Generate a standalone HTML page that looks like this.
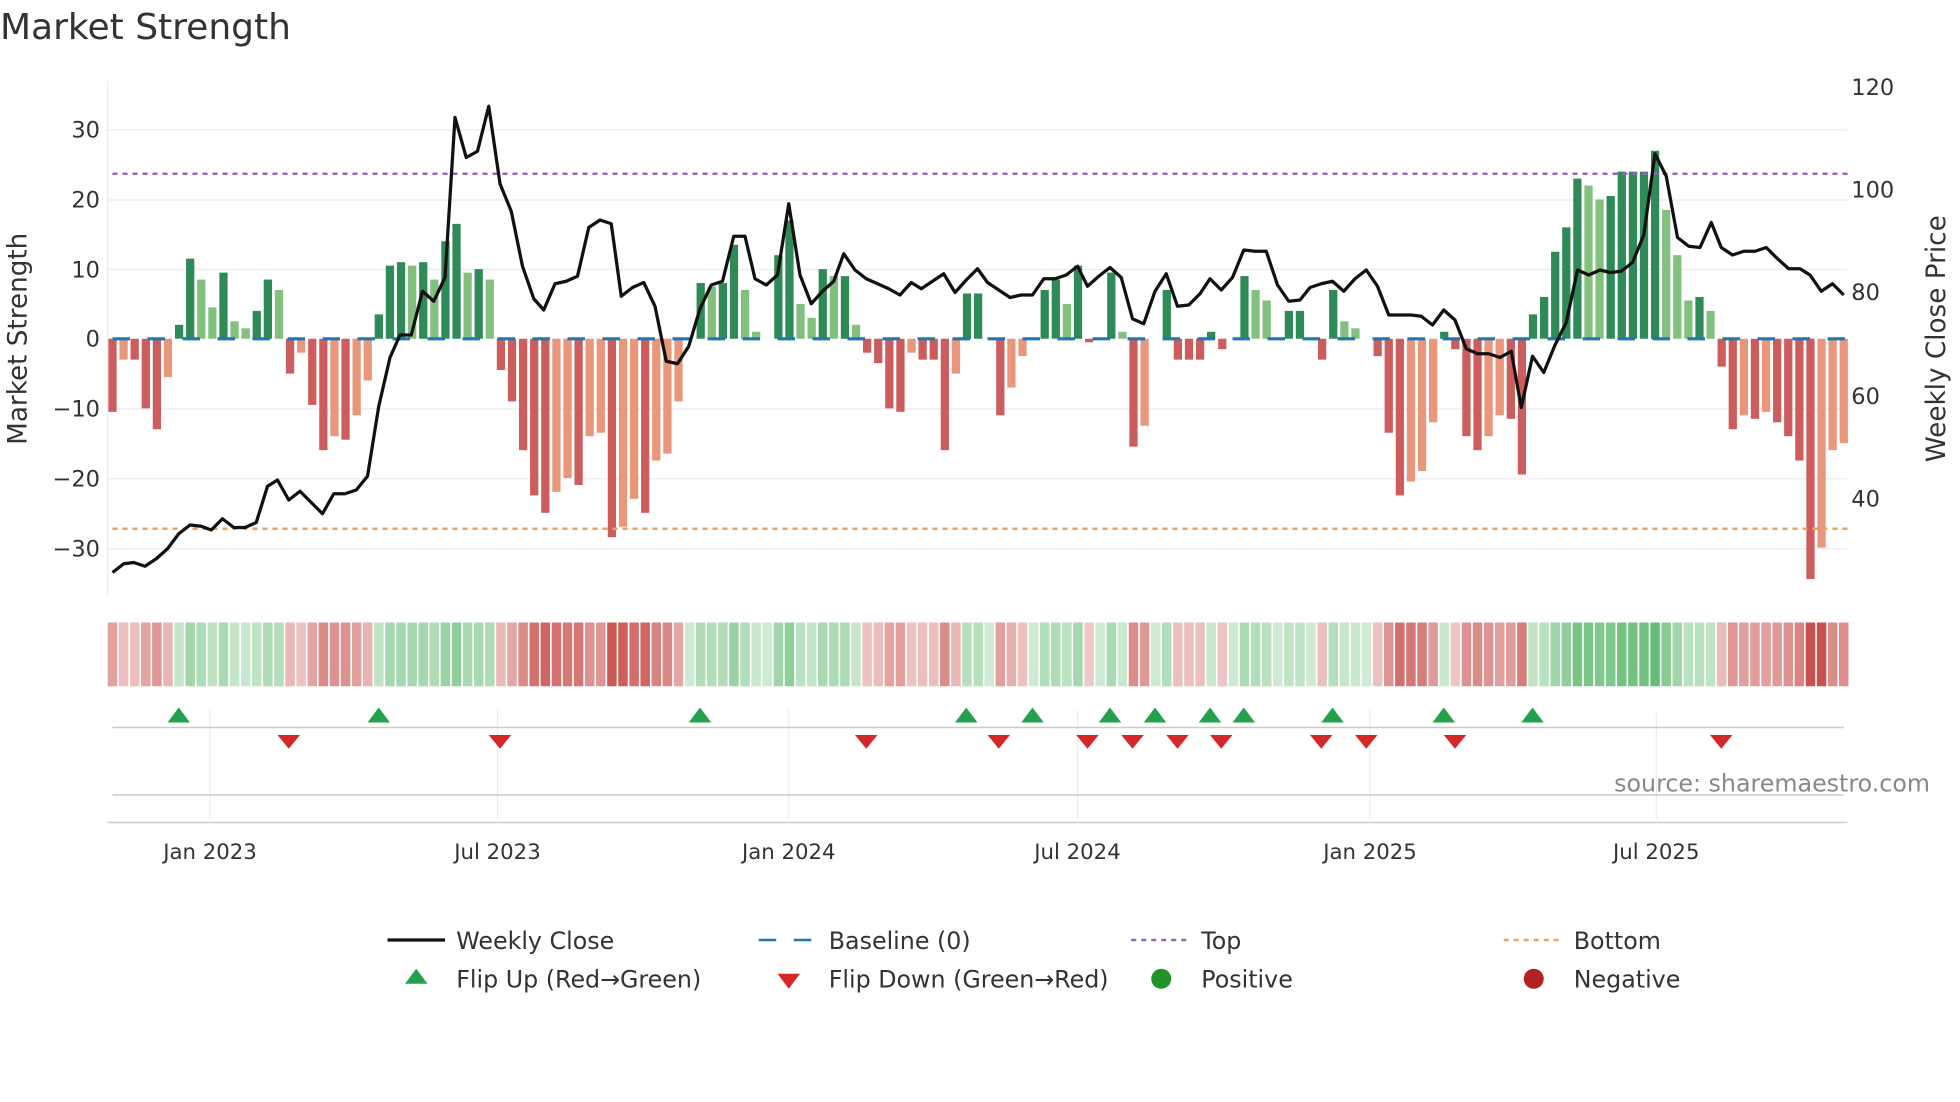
<!DOCTYPE html>
<html><head><meta charset="utf-8"><style>
html,body{margin:0;padding:0;background:#fff;}
svg{display:block;font-family:"DejaVu Sans","Liberation Sans",sans-serif;}
</style></head><body>
<svg id="s" width="1960" height="1102" viewBox="0 0 1568 881.6" xmlns="http://www.w3.org/2000/svg">
<rect width="1568" height="882" fill="#fff"/>
<text x="0" y="31" font-size="28.8" fill="#333">Market Strength</text>
<g stroke="#ececf2" stroke-width="1">
<line x1="86" x2="1478" y1="104" y2="104"/><line x1="86" x2="1478" y1="160" y2="160"/>
<line x1="86" x2="1478" y1="215.5" y2="215.5"/><line x1="86" x2="1478" y1="327" y2="327"/>
<line x1="86" x2="1478" y1="383" y2="383"/><line x1="86" x2="1478" y1="439" y2="439"/>
<line x1="86" x2="86" y1="65" y2="478"/>
</g>
<g font-size="18" fill="#333" text-anchor="end">
<text x="80" y="110">30</text><text x="80" y="166">20</text><text x="80" y="222">10</text><text x="80" y="277">0</text>
<text x="80" y="333">−10</text><text x="80" y="389">−20</text><text x="80" y="445">−30</text>
</g>
<g font-size="18" fill="#333">
<text x="1481" y="76">120</text><text x="1481" y="158">100</text><text x="1481" y="240">80</text><text x="1481" y="323">60</text><text x="1481" y="405">40</text>
</g>
<text transform="translate(21,271) rotate(-90)" font-size="21" fill="#333" text-anchor="middle">Market Strength</text>
<text transform="translate(1556,271) rotate(-90)" font-size="21" fill="#333" text-anchor="middle">Weekly Close Price</text>
<g id="bars"></g>
<line x1="90" x2="1478" y1="271" y2="271" stroke="#1f77b4" stroke-width="2.5" stroke-dasharray="14,14"/>
<line x1="90" x2="1478" y1="139" y2="139" stroke="#9467bd" stroke-width="2" stroke-dasharray="4,4"/>
<line x1="90" x2="1478" y1="423" y2="423" stroke="#f0a060" stroke-width="2" stroke-dasharray="4,4"/>
<polyline id="price" fill="none" stroke="#111" stroke-width="2.6" stroke-linejoin="round"/>
<g id="heat"></g>
<g stroke="#ececf2"><line x1="168" x2="168" y1="568" y2="655"/><line x1="398" x2="398" y1="568" y2="655"/><line x1="631" x2="631" y1="568" y2="655"/><line x1="862" x2="862" y1="568" y2="655"/><line x1="1096" x2="1096" y1="568" y2="655"/><line x1="1325" x2="1325" y1="568" y2="655"/></g>
<line x1="90" x2="1475" y1="582" y2="582" stroke="#ccc" stroke-width="1.2"/>
<line x1="90" x2="1475" y1="636" y2="636" stroke="#ccc" stroke-width="1.2"/>
<line x1="86" x2="1478" y1="658" y2="658" stroke="#ccc" stroke-width="1.2"/>
<g id="mk"></g>
<text x="1544" y="633" font-size="19" fill="#888" text-anchor="end">source: sharemaestro.com</text>
<g font-size="17" fill="#333" text-anchor="middle">
<text x="168" y="687">Jan 2023</text><text x="398" y="687">Jul 2023</text><text x="631" y="687">Jan 2024</text>
<text x="862" y="687">Jul 2024</text><text x="1096" y="687">Jan 2025</text><text x="1325" y="687">Jul 2025</text>
</g>
<g font-size="19" fill="#333">
<line x1="310" x2="356" y1="752" y2="752" stroke="#111" stroke-width="2.6"/><text x="365" y="759">Weekly Close</text>
<line x1="607" x2="651" y1="752" y2="752" stroke="#1f77b4" stroke-width="2" stroke-dasharray="14,14"/><text x="663" y="759">Baseline (0)</text>
<line x1="905" x2="949" y1="752" y2="752" stroke="#9467bd" stroke-width="2" stroke-dasharray="4,4"/><text x="961" y="759">Top</text>
<line x1="1203" x2="1247" y1="752" y2="752" stroke="#f0a060" stroke-width="2" stroke-dasharray="4,4"/><text x="1259" y="759">Bottom</text>
<polygon points="333,775 342,787 324,787" fill="#22a24a"/><text x="365" y="790">Flip Up (Red→Green)</text>
<polygon points="622,779 640,779 631,791" fill="#d62728"/><text x="663" y="790">Flip Down (Green→Red)</text>
<circle cx="929" cy="783" r="8" fill="#22922a"/><text x="961" y="790">Positive</text>
<circle cx="1227" cy="783" r="8" fill="#b22222"/><text x="1259" y="790">Negative</text>
</g>
</svg>
<script>
var V=[-10.5,-3,-3,-10,-13,-5.5,2,11.5,8.5,4.5,9.5,2.5,1.5,4,8.5,7,-5,-2,-9.5,-16,-14,-14.5,-11,-6,3.5,10.5,11,10.5,11,8.5,14,16.5,9.5,10,8.5,-4.5,-9,-16,-22.5,-25,-22,-20,-21,-14,-13.5,-28.5,-27,-23,-25,-17.5,-16.5,-9,0,8,7.5,8,13.5,7,1,0,12,17,5,3,10,9,9,2,-2,-3.5,-10,-10.5,-2,-3,-3,-16,-5,6.5,6.5,0,-11,-7,-2.5,0,7,8.5,5,10.5,-0.5,0,9.5,1,-15.5,-12.5,0,7,-3,-3,-3,1,-1.5,0,9,7,5.5,0,4,4,0,-3,7,2.5,1.5,0,-2.5,-13.5,-22.5,-20.5,-19,-12,1,-1.5,-14,-16,-14,-11,-11.5,-19.5,3.5,6,12.5,16,23,22,20,20.5,24,24,24,27,18.5,12,5.5,6,4,-4,-13,-11,-11.5,-10.5,-12,-14,-17.5,-34.5,-30,-16,-15];
var n=V.length,x0=90,dx=(1475-90)/(n-1),NS="http://www.w3.org/2000/svg";
var b=document.getElementById('bars'),h=document.getElementById('heat');
function el(t,a,p){var e=document.createElementNS(NS,t);for(var k in a)e.setAttribute(k,a[k]);p.appendChild(e);}
function mix(c,t){return 'rgb('+c.map(function(v){return Math.round(255+(v-255)*t)}).join(',')+')';}
for(var i=0;i<n;i++){var v=V[i],p=i?V[i-1]:0,x=x0+i*dx,col;
 if(v>=0)col=(v>=p)?'#2e8b57':'#82c07e';else col=(v<=p)?'#cd5c5c':'#e9967a';
 if(v!=0){var y=271-v*5.57;el('rect',{x:x-3.3,y:Math.min(y,271),width:6.6,height:Math.abs(v*5.57),fill:col},b);}
 var t=Math.min(1,0.3+Math.abs(v)/30*0.7);
 el('rect',{x:x-3.8,y:498,width:7.6,height:51,fill:v>=0?mix([92,184,108],t):mix([201,82,79],t)},h);}
var P="90,458 99,451 107,450 116,453 125,447 134,439 143,427 152,420 161,421 169,424 178,415 187,422 196,422 205,418 214,389 222,384 231,400 240,393 249,402 258,411 267,395 276,395 285,392 294,381 303,325 312,286 320,268 329,268 338,233 347,241 356,222 364,94 373,126 382,121 391,85 400,147 409,169 418,213 427,239 435,248 444,227 453,225 462,221 471,182 480,176 489,179 497,237 506,230 515,226 524,245 533,289 542,291 551,277 560,247 569,228 578,225 587,189 596,189 604,223 613,228 622,220 631,163 640,220 649,243 658,233 667,225 675,203 684,216 693,223 702,227 711,231 720,236 729,226 737,231 746,225 755,219 764,234 773,224 782,215 790,226 799,232 808,238 817,236 826,236 835,223 844,223 853,220 862,213 870,229 879,221 888,214 897,222 906,255 915,259 924,233 933,219 942,245 951,244 960,235 968,223 977,232 986,222 995,200 1004,201 1013,201 1022,228 1031,241 1040,240 1048,230 1057,227 1066,225 1075,233 1084,223 1093,216 1102,229 1111,252 1120,252 1129,252 1137,253 1146,260 1155,248 1164,256 1173,279 1182,283 1191,283 1200,286 1209,281 1217,326 1226,285 1235,298 1244,276 1253,258 1262,216 1271,220 1280,216 1288,218 1297,217 1306,210 1315,188 1324,123 1333,141 1342,190 1351,197 1360,198 1369,178 1377,198 1386,204 1395,201 1404,201 1413,198 1422,207 1431,215 1440,215 1448,220 1457,233 1466,227 1475,236";
document.getElementById('price').setAttribute('points',P);
var m=document.getElementById('mk');
[143,303,560,773,826,888,924,968,995,1066,1155,1226].forEach(function(x){el('polygon',{points:x+',566 '+(x+9)+',578 '+(x-9)+',578',fill:'#22a24a'},m);});
[231,400,693,799,870,906,942,977,1057,1093,1164,1377].forEach(function(x){el('polygon',{points:(x-9)+',588 '+(x+9)+',588 '+x+',599',fill:'#d62728'},m);});
</script>
</body></html>
